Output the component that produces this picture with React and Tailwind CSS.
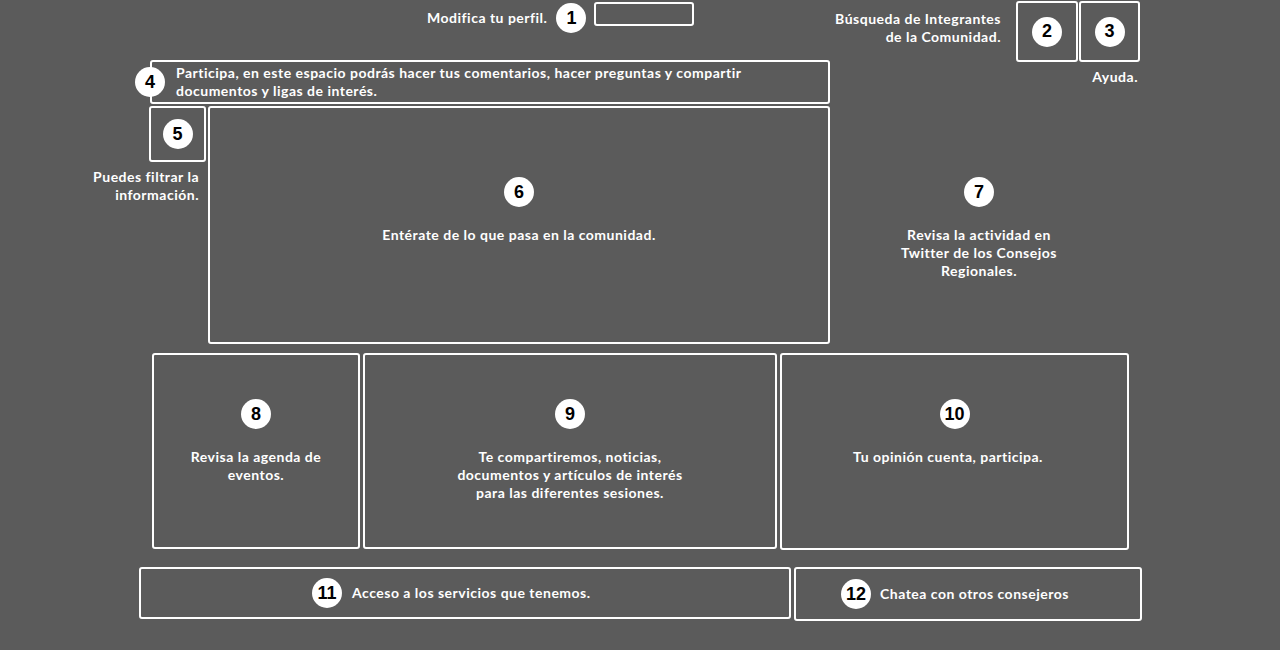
import React from "react";

const Num = ({ n, className = "" }) => (
  <div
    className={`flex h-[30px] w-[30px] shrink-0 items-center justify-center rounded-full bg-white text-[18px] font-bold text-black ${className}`}
    style={{ fontFamily: '"Liberation Sans", Arial, sans-serif' }}
  >
    {n}
  </div>
);

const Box = ({ className = "", children }) => (
  <div className={`rounded-[3px] border-2 border-white ${className}`}>{children}</div>
);

const Txt = ({ className = "", children }) => (
  <p className={`text-[14px] font-bold leading-[18px] tracking-[0.5px] text-white ${className}`}>
    {children}
  </p>
);

export default function App() {
  return (
    <div
      className="h-[650px] w-[1280px] overflow-hidden bg-[#5b5b5b]"
      style={{ fontFamily: 'Lato, "Open Sans", sans-serif' }}
    >
      {/* top bar */}
      <div className="flex h-[62px] items-start">
        <div className="ml-[427px] flex h-[36px] items-center">
          <Txt>Modifica tu perfil.</Txt>
          <Num n="1" className="ml-[9px]" />
          <Box className="ml-[8px] mt-[2px] h-[24px] w-[100px] self-start" />
        </div>
        <div className="ml-auto mr-[140px] flex items-start">
          <Txt className="mt-[10px] text-right">
            Búsqueda de Integrantes
            <br />
            de la Comunidad.
          </Txt>
          <Box className="ml-[15px] mt-[1px] flex h-[61px] w-[62px] items-center justify-center">
            <Num n="2" />
          </Box>
          <Box className="ml-[1px] mt-[1px] flex h-[61px] w-[61px] items-center justify-center">
            <Num n="3" />
          </Box>
        </div>
      </div>

      {/* comments row */}
      <div className="-mt-[2px] flex items-start">
        <Box className="ml-[150px] flex h-[44px] w-[680px] items-center">
          <Num n="4" className="-ml-[17px]" />
          <Txt className="ml-[11px]">
            Participa, en este espacio podrás hacer tus comentarios, hacer preguntas y compartir
            <br />
            documentos y ligas de interés.
          </Txt>
        </Box>
        <Txt className="ml-auto mr-[142px] mt-[8px]">Ayuda.</Txt>
      </div>

      {/* feed row */}
      <div className="mt-[2px] flex items-start">
        <div className="flex w-[206px] flex-col items-end">
          <Box className="flex h-[56px] w-[57px] items-center justify-center">
            <Num n="5" />
          </Box>
          <Txt className="mr-[7px] mt-[6px] text-right">
            Puedes filtrar la
            <br />
            información.
          </Txt>
        </div>
        <Box className="ml-[2px] flex h-[238px] w-[622px] flex-col items-center pt-[69px]">
          <Num n="6" />
          <Txt className="mt-[19px]">Entérate de lo que pasa en la comunidad.</Txt>
        </Box>
        <div className="flex w-[298px] flex-col items-center pt-[71px]">
          <Num n="7" />
          <Txt className="mt-[19px] text-center">
            Revisa la actividad en
            <br />
            Twitter de los Consejos
            <br />
            Regionales.
          </Txt>
        </div>
      </div>

      {/* cards row */}
      <div className="mt-[9px] flex items-start">
        <Box className="ml-[152px] flex h-[196px] w-[208px] flex-col items-center pt-[44px]">
          <Num n="8" />
          <Txt className="mt-[19px] text-center">
            Revisa la agenda de
            <br />
            eventos.
          </Txt>
        </Box>
        <Box className="ml-[3px] flex h-[196px] w-[414px] flex-col items-center pt-[44px]">
          <Num n="9" />
          <Txt className="mt-[19px] text-center">
            Te compartiremos, noticias,
            <br />
            documentos y artículos de interés
            <br />
            para las diferentes sesiones.
          </Txt>
        </Box>
        <Box className="ml-[3px] flex h-[197px] w-[349px] flex-col items-center pt-[44px]">
          <Num n="10" />
          <Txt className="mr-[13px] mt-[19px] text-center">Tu opinión cuenta, participa.</Txt>
        </Box>
      </div>

      {/* bottom row */}
      <div className="mt-[17px] flex items-start">
        <Box className="ml-[139px] flex h-[52px] w-[652px] items-center pl-[171px]">
          <Num n="11" />
          <Txt className="ml-[10px]">Acceso a los servicios que tenemos.</Txt>
        </Box>
        <Box className="ml-[3px] flex h-[54px] w-[348px] items-center pl-[45px]">
          <Num n="12" />
          <Txt className="ml-[9px]">Chatea con otros consejeros</Txt>
        </Box>
      </div>
    </div>
  );
}
